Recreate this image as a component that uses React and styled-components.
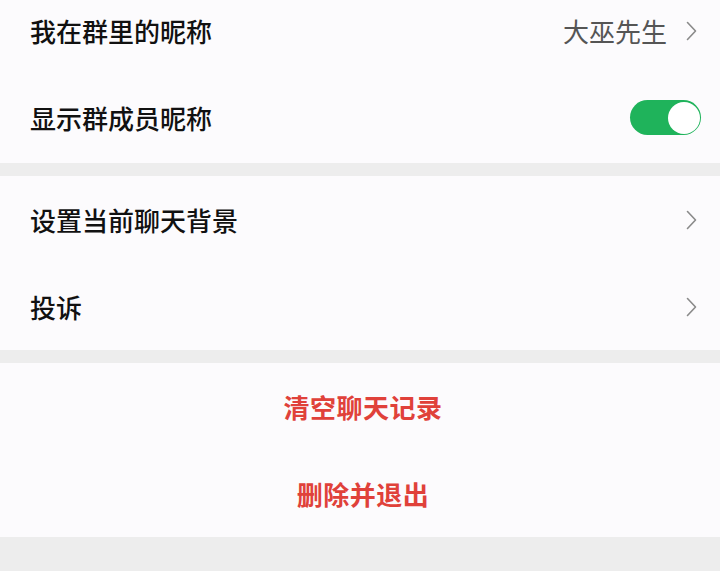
import React from "react";
import styled, { createGlobalStyle } from "styled-components";

const GlobalStyle = createGlobalStyle`
  html, body {
    margin: 0;
    padding: 0;
    background: #ededed;
  }
  body {
    font-family: "Noto Sans CJK SC", "Noto Sans", sans-serif;
    overflow: hidden;
  }
`;

// 页面滚动后的可视区域
const Screen = styled.div`
  width: 720px;
  height: 571px;
  overflow: hidden;
  background: #ededed;
`;

const List = styled.div`
  margin-top: -13px;
  display: flex;
  flex-direction: column;
  gap: 13px;
`;

const Section = styled.div`
  background: #fcfbfd;
  padding-bottom: ${(p) => p.$tail ?? 0}px;
`;

const Row = styled.div`
  height: 87px;
  display: flex;
  align-items: center;
  justify-content: ${(p) => (p.$center ? "center" : "space-between")};
  padding: 0 ${(p) => p.$right ?? 23}px 0 ${(p) => (p.$center ? 6 : 30)}px;
  box-sizing: border-box;
`;

const Label = styled.span`
  font-size: 26px;
  font-weight: 500;
  color: #111;
`;

const Danger = styled.span`
  font-size: 26px;
  font-weight: 700;
  color: #e0413a;
  letter-spacing: 0.5px;
`;

const Extra = styled.div`
  display: flex;
  align-items: center;
  gap: 19px;
`;

const Value = styled.span`
  font-size: 26px;
  color: #555;
`;

const Switch = styled.div`
  width: 71px;
  height: 35px;
  border-radius: 18px;
  background: #1fb35b;
  display: flex;
  align-items: center;
  justify-content: flex-end;
  padding: 0 1.5px;
  box-sizing: border-box;
`;

const Knob = styled.div`
  width: 32px;
  height: 32px;
  border-radius: 50%;
  background: #fff;
`;

const Chevron = () => (
  <svg width="11" height="20" viewBox="0 0 11 20" fill="none">
    <path d="M1.5 1.5 L9.5 10 L1.5 18.5" stroke="#8a8a8a" strokeWidth="1.6" strokeLinecap="round" strokeLinejoin="round" />
  </svg>
);

const App = () => {
  return (
    <Screen>
      <GlobalStyle />
      <List>
        <Section $tail={2}>
          <Row>
            <Label>我在群里的昵称</Label>
            <Extra>
              <Value>大巫先生</Value>
              <Chevron />
            </Extra>
          </Row>
          <Row $right={19}>
            <Label>显示群成员昵称</Label>
            <Switch>
              <Knob />
            </Switch>
          </Row>
        </Section>
        <Section>
          <Row>
            <Label>设置当前聊天背景</Label>
            <Chevron />
          </Row>
          <Row>
            <Label>投诉</Label>
            <Chevron />
          </Row>
        </Section>
        <Section>
          <Row $center $right={0}>
            <Danger>清空聊天记录</Danger>
          </Row>
          <Row $center $right={0}>
            <Danger>删除并退出</Danger>
          </Row>
        </Section>
      </List>
    </Screen>
  );
};

export default App;
